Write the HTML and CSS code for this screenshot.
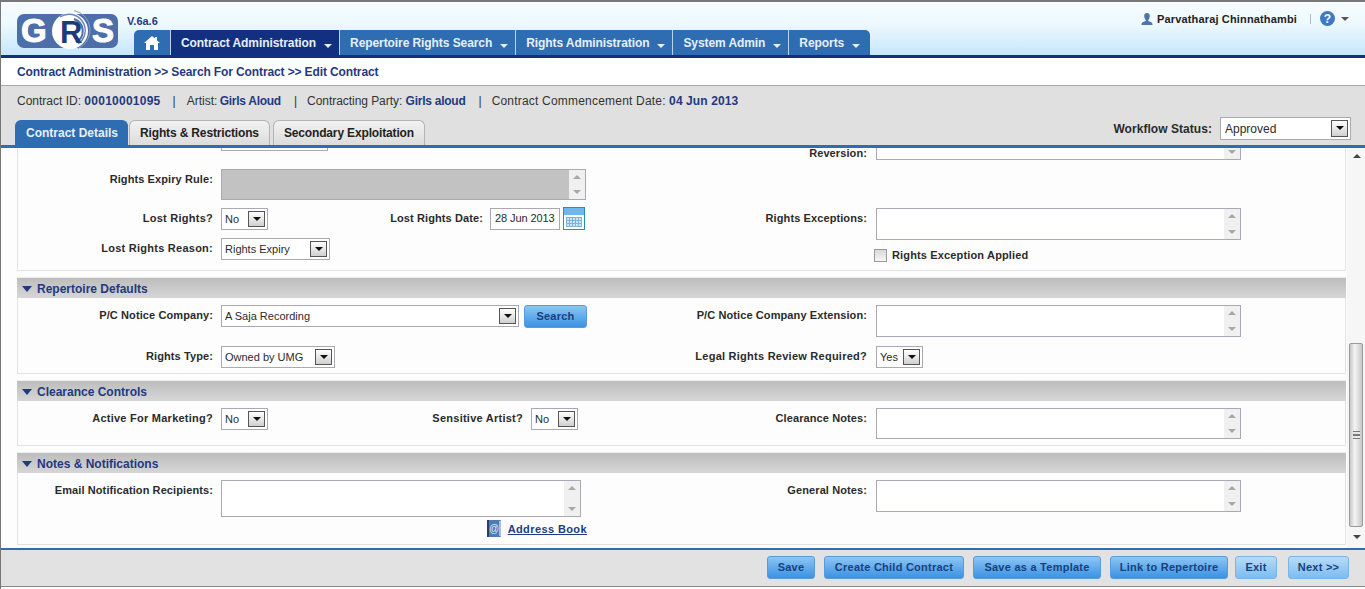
FILE: index.html

```html
<!DOCTYPE html>
<html>
<head>
    <title>GRS - Edit Contract</title>
    <link rel="stylesheet" href="styles.css">
</head>
<body>
    <div class="header">
        <div class="logo-wrap">
            <svg class="logo" width="106" height="44" viewBox="0 0 106 44">
                <rect x="1" y="6" width="101" height="34" rx="7" fill="#4d6ea8"/>
                <path d="M58 2.500a20 20 0 0 1 4 38" fill="none" stroke="#8aa0c8"/>
                <circle cx="54" cy="23" r="18" fill="#fff"/>
                <path d="M44 9a16 16 0 0 1 18 27" fill="none" stroke="#6d88b8" stroke-width="1.500"/>
                <path d="M58 11a12.500 12.500 0 0 1 2 23" fill="none" stroke="#4d6ea8" stroke-width="2"/>
                <text x="5" y="34" class="logo-letter">G</text>
                <text x="44" y="35" class="logo-r">R</text>
                <text x="76" y="34" class="logo-letter">S</text>
            </svg>
        </div>
        <div class="version">V.6a.6</div>
        <ul class="nav">
            <li class="home">
                <svg width="16" height="14" viewBox="0 0 16 14"><path d="M8 0 0 7h2v7h4V9h4v5h4V7h2l-3-2.600V1h-2v1.600z" fill="#fff"/></svg>
            </li>
            <li class="active">Contract Administration<i class="caret"></i></li>
            <li>Repertoire Rights Search<i class="caret"></i></li>
            <li>Rights Administration<i class="caret"></i></li>
            <li>System Admin<i class="caret"></i></li>
            <li class="last">Reports<i class="caret"></i></li>
        </ul>
        <div class="user">
            <svg width="12" height="12" viewBox="0 0 12 12"><path d="M6 0c1.800 0 2.800 1.300 2.800 3S7.800 6.500 7.300 7v1c1.500.5 4.200 1 4.200 3.500V12H.5v-.5C.5 9 3.200 8.500 4.700 8V7C4.200 6.500 3.200 4.700 3.200 3S4.200 0 6 0z" fill="#4f74a8"/></svg>
            <span class="user-name">Parvatharaj Chinnathambi</span>
            <span class="user-sep"></span>
            <svg width="15" height="15" viewBox="0 0 15 15"><circle cx="7.500" cy="7.500" r="7.500" fill="#3f78c4"/><text x="7.500" y="12" class="help-q">?</text></svg>
            <i class="caret dark"></i>
        </div>
    </div>

    <div class="crumbs">Contract Administration &gt;&gt; Search For Contract &gt;&gt; Edit Contract</div>

    <div class="infobar">
        <div class="info">
            Contract ID: <b class="wide">00010001095</b><span class="pipe first-pipe">|</span>Artist: <b class="narrow">Girls Aloud</b><span class="pipe second-pipe">|</span><span class="party">Contracting Party:</span> <b class="narrow-b">Girls aloud</b><span class="pipe">|</span><span class="roomy">Contract Commencement Date:</span> <b class="date-val">04 Jun 2013</b>
        </div>
        <div class="tabrow">
            <div class="tab on">Contract Details</div>
            <div class="tab">Rights &amp; Restrictions</div>
            <div class="tab">Secondary Exploitation</div>
            <div class="workflow">
                <span class="label">Workflow Status:</span>
                <div class="sel w131 tall"><span>Approved</span><i class="sel-btn"></i></div>
            </div>
        </div>
    </div>

    <div class="main">
        <div class="scroll">
            <div class="scroll-inner">
                <div class="section first">
                    <div class="cols">
                        <div class="col-left">
                            <div class="row"><span class="label"></span><div class="sel w107"></div></div>
                            <div class="row gap-18">
                                <span class="label">Rights Expiry Rule:</span>
                                <div class="txt w365 h31 gray"><i class="spin"><b class="up"></b><b class="down"></b></i></div>
                            </div>
                            <div class="row gap-8">
                                <span class="label loose">Lost Rights?</span>
                                <div class="sel w47"><span>No</span><i class="sel-btn"></i></div>
                                <span class="label mid">Lost Rights Date:</span>
                                <div class="date">28 Jun 2013</div>
                                <svg class="cal" width="22" height="23" viewBox="0 0 22 23">
                                    <rect x=".5" y=".5" width="21" height="22" fill="#fff" stroke="#2a8fb5"/>
                                    <rect x="1" y="1" width="20" height="7" fill="#6cb8ee"/>
                                    <rect x="3" y="10" width="16" height="10" fill="#cfe4f5"/>
                                    <path d="M3 10.500h16M3 13.500h16M3 16.500h16M3 19.500h16M3.500 10v10M6.500 10v10M9.500 10v10M12.500 10v10M15.500 10v10M18.500 10v10" stroke="#7fb2d8" fill="none"/>
                                </svg>
                            </div>
                            <div class="row gap-8">
                                <span class="label loose">Lost Rights Reason:</span>
                                <div class="sel w109"><span>Rights Expiry</span><i class="sel-btn"></i></div>
                            </div>
                        </div>
                        <div class="col-right">
                            <div class="row">
                                <span class="label reversion">Reversion:</span>
                                <div class="txt w365 h31"><i class="spin"><b class="up"></b><b class="down"></b></i></div>
                            </div>
                            <div class="row gap-48">
                                <span class="label">Rights Exceptions:</span>
                                <div class="txt w365 h32"><i class="spin"><b class="up"></b><b class="down"></b></i></div>
                            </div>
                            <div class="check-row">
                                <i class="check"></i><span class="check-text">Rights Exception Applied</span>
                            </div>
                        </div>
                    </div>
                </div>

                <div class="section">
                    <div class="sec-head"><i class="tri"></i>Repertoire Defaults</div>
                    <div class="cols defaults">
                        <div class="col-left">
                            <div class="row">
                                <span class="label">P/C Notice Company:</span>
                                <div class="sel w298"><span>A Saja Recording</span><i class="sel-btn"></i></div>
                                <div class="btn search">Search</div>
                            </div>
                            <div class="row gap-18">
                                <span class="label">Rights Type:</span>
                                <div class="sel w114"><span>Owned by UMG</span><i class="sel-btn"></i></div>
                            </div>
                        </div>
                        <div class="col-right">
                            <div class="row">
                                <span class="label">P/C Notice Company Extension:</span>
                                <div class="txt w365 h32"><i class="spin"><b class="up"></b><b class="down"></b></i></div>
                            </div>
                            <div class="row gap-9">
                                <span class="label loose">Legal Rights Review Required?</span>
                                <div class="sel w47"><span>Yes</span><i class="sel-btn"></i></div>
                            </div>
                        </div>
                    </div>
                </div>

                <div class="section">
                    <div class="sec-head"><i class="tri"></i>Clearance Controls</div>
                    <div class="cols clearance">
                        <div class="col-left">
                            <div class="row">
                                <span class="label loose">Active For Marketing?</span>
                                <div class="sel w47"><span>No</span><i class="sel-btn"></i></div>
                                <span class="label mid sensitive loose">Sensitive Artist?</span>
                                <div class="sel w47"><span>No</span><i class="sel-btn"></i></div>
                            </div>
                        </div>
                        <div class="col-right">
                            <div class="row">
                                <span class="label">Clearance Notes:</span>
                                <div class="txt w365 h31"><i class="spin"><b class="up"></b><b class="down"></b></i></div>
                            </div>
                        </div>
                    </div>
                </div>

                <div class="section">
                    <div class="sec-head"><i class="tri"></i>Notes &amp; Notifications</div>
                    <div class="cols notes">
                        <div class="col-left">
                            <div class="row">
                                <span class="label">Email Notification Recipients:</span>
                                <div class="txt w360 h37"><i class="spin"><b class="up"></b><b class="down"></b></i></div>
                            </div>
                            <div class="addr-row">
                                <svg width="14" height="17" viewBox="0 0 14 17">
                                    <rect width="14" height="17" rx="1" fill="#4d7cb4"/>
                                    <rect width="2" height="17" fill="#2c3f5e"/>
                                    <rect x="12" y="1" width="2" height="15" fill="#a8c0d8"/>
                                    <text x="7" y="12" class="addr-at">@</text>
                                </svg>
                                <a class="addr-link">Address Book</a>
                            </div>
                        </div>
                        <div class="col-right">
                            <div class="row">
                                <span class="label">General Notes:</span>
                                <div class="txt w365 h32"><i class="spin"><b class="up"></b><b class="down"></b></i></div>
                            </div>
                        </div>
                    </div>
                </div>
            </div>
        </div>
        <div class="scrollbar">
            <b class="up"></b>
            <div class="thumb"><span></span></div>
            <b class="down"></b>
        </div>
    </div>

    <div class="footer">
        <div class="btn b-save">Save</div>
        <div class="btn b-child">Create Child Contract</div>
        <div class="btn b-template">Save as a Template</div>
        <div class="btn b-link">Link to Repertoire</div>
        <div class="btn light b-exit">Exit</div>
        <div class="btn light b-next">Next &gt;&gt;</div>
    </div>
</body>
</html>
```

FILE: styles.css

```css
html, body {
    margin: 0;
    padding: 0;
    height: 589px;
    overflow: hidden;
}
body {
    font-family: "Liberation Sans", Arial, sans-serif;
    font-size: 12px;
    color: #2b2b2b;
    background-color: #fff;
    border-left: 1px solid #777;
    box-sizing: border-box;
}

/* header */
.header {
    height: 53px;
    border-top: 2px solid #777;
    border-bottom: 3px solid #12307f;
    background: linear-gradient(#f6fcff 0%, #eef9fe 40%, #c5e7fa 100%);
    display: flex;
    position: relative;
}
.logo-wrap {
    width: 109px;
    padding: 6px 0 0 15px;
}
.logo {
    display: block;
}
.logo-letter {
    font: bold 33px "Liberation Sans", Arial, sans-serif;
    fill: #fff;
    stroke: #fff;
    stroke-width: 1px;
}
.logo-r {
    font: bold 31px "Liberation Sans", Arial, sans-serif;
    fill: #1f3a7a;
}
.version {
    margin-top: 13px;
    font-size: 11px;
    font-weight: bold;
    color: #1d3a85;
    position: absolute;
    left: 126px;
}
.nav {
    list-style: none;
    margin: 28px 0 0 9px;
    padding: 0;
    display: flex;
    height: 25px;
}
.nav li {
    background-color: #2f6db3;
    font-size: 12px;
    font-weight: bold;
    line-height: 26px;
    padding: 0 7px 0 10px;
    border-left: 1px solid #b9d3ea;
    white-space: nowrap;
    color: #e6f0fa;
    letter-spacing: -.08px;
}
.nav li.home {
    width: 36px;
    padding: 0;
    border-left: 0;
    border-radius: 5px 0 0 0;
    display: flex;
    align-items: center;
    justify-content: center;
    box-sizing: border-box;
}
.nav li.active {
    background-color: #12307f;
}
.nav li.last {
    border-radius: 0 5px 0 0;
    padding-right: 10px;
}
.caret {
    display: inline-block;
    width: 0;
    height: 0;
    margin-left: 8px;
    vertical-align: -1px;
    border-left: 4px solid transparent;
    border-right: 4px solid transparent;
    border-top: 4px solid #e6f0fa;
}
.caret.dark {
    margin-left: 6px;
    border-top-color: #555;
    vertical-align: 0;
}
.user {
    position: absolute;
    right: 16px;
    top: 9px;
    display: flex;
    align-items: center;
    font-size: 11px;
    font-weight: bold;
    color: #222;
}
.user-name {
    margin: 0 13px 0 4px;
    letter-spacing: .15px;
}
.user-sep {
    width: 1px;
    height: 10px;
    background-color: #aab8c4;
    margin-right: 9px;
}
.help-q {
    font: bold 12px "Liberation Sans", Arial, sans-serif;
    fill: #fff;
    text-anchor: middle;
}

/* breadcrumb */
.crumbs {
    height: 28px;
    box-sizing: border-box;
    padding-left: 16px;
    line-height: 28px;
    font-weight: bold;
    color: #1f3a80;
    border-bottom: 1px solid #a8a8a8;
    letter-spacing: -.12px;
}

/* contract info + tabs */
.infobar {
    height: 62px;
    background-color: #e0e0e0;
    box-sizing: border-box;
    border-bottom: 3px solid #2f6db3;
    padding-top: 8px;
}
.info {
    padding-left: 16px;
    height: 26px;
    line-height: 15px;
    color: #333;
}
.info b {
    color: #1f3a80;
}
.info b.wide {
    letter-spacing: .25px;
}
.info b.narrow {
    letter-spacing: -.27px;
    margin-left: -1px;
}
.info b.narrow-b {
    letter-spacing: -.25px;
}
.info b.date-val {
    letter-spacing: .1px;
}
.party {
    letter-spacing: -.05px;
}
.roomy {
    letter-spacing: .2px;
}
.pipe {
    margin: 0 10px 0 13px;
}
.pipe.first-pipe {
    margin: 0 11px 0 12px;
}
.tabrow {
    display: flex;
    padding-left: 14px;
    height: 25px;
    position: relative;
}
.tab {
    height: 25px;
    box-sizing: border-box;
    padding: 0 10px;
    margin-right: 1px;
    line-height: 24px;
    font-weight: bold;
    color: #222;
    border: 1px solid #b3b3b3;
    border-bottom: 0;
    border-radius: 6px 6px 0 0;
    background: linear-gradient(#f2f2f2, #dcdcdc);
    letter-spacing: -.15px;
}
.tab + .tab + .tab {
    margin-left: 2px;
}
.tab.on {
    background: #2f6db3;
    border-color: #2f6db3;
    color: #e6f0fa;
    letter-spacing: 0;
    padding-right: 9px;
}
.workflow {
    position: absolute;
    right: 14px;
    top: -3px;
    display: flex;
    align-items: center;
}
.workflow .label {
    width: auto;
    margin-right: 8px;
    font-size: 12px;
    padding: 0;
    letter-spacing: .05px;
}

/* scrolling form */
.main {
    height: 400px;
    display: flex;
    background-color: #fdfdfd;
}
.scroll {
    width: 1346px;
    height: 400px;
    overflow: hidden;
}
.scroll-inner {
    margin-top: -19px;
    padding-left: 16px;
}
.section {
    width: 1329px;
    box-sizing: border-box;
    border: 1px solid #e2e2e2;
    border-top: 0;
    margin-bottom: 6px;
}
.sec-head {
    height: 21px;
    line-height: 22px;
    box-sizing: border-box;
    border-top: 1px solid #ededed;
    background: linear-gradient(#bdbdbd, #d6d6d6);
    font-weight: bold;
    color: #1f3a80;
    padding-left: 5px;
    margin: 0 -1px;
}
.tri {
    display: inline-block;
    width: 0;
    height: 0;
    margin-right: 5px;
    vertical-align: 1px;
    border-left: 5px solid transparent;
    border-right: 5px solid transparent;
    border-top: 6px solid #1f3a80;
}
.cols {
    display: flex;
    padding: 0 0 8px;
}
.cols.defaults {
    padding: 7px 0 5px;
}
.cols.clearance {
    padding: 7px 0 6px;
}
.cols.notes {
    padding: 7px 0 7px;
}
.col-left {
    width: 622px;
}
.row {
    display: flex;
    align-items: flex-start;
}
.gap-18 { margin-top: 18px; }
.gap-9 { margin-top: 9px; }
.gap-8 { margin-top: 8px; }
.gap-48 { margin-top: 48px; }
.label {
    width: 195px;
    margin-right: 8px;
    padding-top: 4px;
    text-align: right;
    font-size: 11px;
    font-weight: bold;
    color: #2b2b2b;
    flex: none;
    white-space: nowrap;
    letter-spacing: .1px;
}
.label.loose {
    letter-spacing: .25px;
}
.col-right .label {
    width: 227px;
    margin-right: 9px;
}
.label.reversion {
    padding-top: 18px;
}
.label.mid {
    width: 215px;
    margin-right: 7px;
}
.label.sensitive {
    width: 255px;
    margin-right: 8px;
}

/* select boxes */
.sel {
    height: 22px;
    box-sizing: border-box;
    border: 1px solid #a9a9b5;
    background-color: #fff;
    position: relative;
    font-size: 11px;
    line-height: 21px;
    padding-left: 3px;
    flex: none;
}
.sel-btn {
    position: absolute;
    right: 2px;
    top: 2px;
    width: 17px;
    height: 16px;
    box-sizing: border-box;
    border: 1px solid #555;
    background: linear-gradient(#fff, #d0d0d0);
}
.sel-btn::after {
    content: "";
    position: absolute;
    left: 4px;
    top: 5px;
    border-left: 4px solid transparent;
    border-right: 4px solid transparent;
    border-top: 4px solid #111;
}
.sel.tall {
    height: 23px;
    font-size: 12px;
    line-height: 22px;
    padding-left: 4px;
}
.sel.tall .sel-btn {
    top: 2px;
    height: 17px;
}
.w47 { width: 47px; }
.w107 { width: 107px; }
.w109 { width: 109px; }
.w114 { width: 114px; }
.w131 { width: 131px; }
.w298 { width: 298px; }

/* textareas with their little spinner */
.txt {
    box-sizing: border-box;
    border: 1px solid #a9a9b5;
    background-color: #fff;
    position: relative;
    flex: none;
}
.txt.gray {
    background-color: #c2c2c2;
}
.w360 { width: 360px; }
.w365 { width: 365px; }
.h31 { height: 31px; }
.h32 { height: 32px; }
.h37 { height: 37px; }
.spin {
    position: absolute;
    right: 0;
    top: 0;
    bottom: 0;
    width: 16px;
    background-color: #f0f0f0;
}
.up, .down {
    position: absolute;
    left: 50%;
    margin-left: -4px;
    border-left: 4px solid transparent;
    border-right: 4px solid transparent;
}
.up {
    top: 5px;
    border-bottom: 4px solid #a8a8a8;
}
.down {
    bottom: 5px;
    border-top: 4px solid #a8a8a8;
}
.date {
    width: 70px;
    height: 22px;
    box-sizing: border-box;
    border: 1px solid #a9a9b5;
    background-color: #fff;
    font-size: 11px;
    line-height: 19px;
    padding-left: 4px;
    flex: none;
    letter-spacing: -.1px;
}
.cal {
    margin: -1px 0 0 3px;
    flex: none;
}
.check-row {
    display: flex;
    align-items: center;
    margin: 8px 0 0 234px;
    height: 14px;
}
.check {
    width: 13px;
    height: 13px;
    box-sizing: border-box;
    border: 1px solid #9a9a9a;
    background: linear-gradient(#d8d8d8, #f6f6f6);
}
.check-text {
    margin-left: 5px;
    font-size: 11px;
    font-weight: bold;
    letter-spacing: .15px;
}
.addr-row {
    display: flex;
    align-items: center;
    justify-content: flex-end;
    width: 569px;
    margin-top: 3px;
}
.addr-row svg {
    margin-right: 7px;
}
.addr-at {
    font: 10px "Liberation Sans", Arial, sans-serif;
    fill: #dcebfa;
    text-anchor: middle;
}
.addr-link {
    font-size: 11px;
    font-weight: bold;
    color: #1f3a80;
    text-decoration: underline;
    letter-spacing: .4px;
}

/* page scrollbar */
.scrollbar {
    width: 18px;
    position: relative;
    background-color: #f6f6f6;
}
.scrollbar .up {
    top: 6px;
    left: 10px;
    border-bottom-color: #444;
}
.scrollbar .down {
    bottom: 9px;
    left: 10px;
    border-top-color: #444;
}
.thumb {
    position: absolute;
    left: 2px;
    top: 195px;
    width: 14px;
    height: 184px;
    box-sizing: border-box;
    border: 1px solid #9a9a9a;
    border-radius: 2px;
    background: linear-gradient(90deg, #c8c8c8, #f4f4f4 40%, #c8c8c8);
    display: flex;
    align-items: center;
    justify-content: center;
}
.thumb span {
    width: 7px;
    height: 6px;
    border-top: 1px solid #777;
    border-bottom: 1px solid #777;
    background: linear-gradient(#e8e8e8 40%, #777 40%, #777 60%, #e8e8e8 60%);
}

/* footer + buttons */
.footer {
    height: 39px;
    box-sizing: border-box;
    background-color: #e2e2e2;
    border-top: 2px solid #2f6db3;
    border-bottom: 1px solid #888;
    display: flex;
    justify-content: flex-end;
    padding: 6px 16px 0 0;
}
.btn {
    height: 23px;
    box-sizing: border-box;
    margin-left: 9px;
    line-height: 21px;
    text-align: center;
    font-size: 11px;
    font-weight: bold;
    letter-spacing: .25px;
    color: #17407c;
    border: 1px solid #5a9ad8;
    border-radius: 3px;
    background: linear-gradient(#8cc6f4, #3a92e4);
    flex: none;
}
.btn.light {
    background: linear-gradient(#b6dcf8, #7cbcf0);
    border-color: #7cb4e4;
}
.b-save { width: 48px; }
.b-child { width: 140px; }
.b-template { width: 128px; }
.b-link { width: 118px; }
.btn.b-exit { width: 42px; margin-left: 7px; }
.btn.b-next { width: 61px; margin-left: 11px; }
.btn.search {
    width: 63px;
    margin-left: 5px;
}
```
